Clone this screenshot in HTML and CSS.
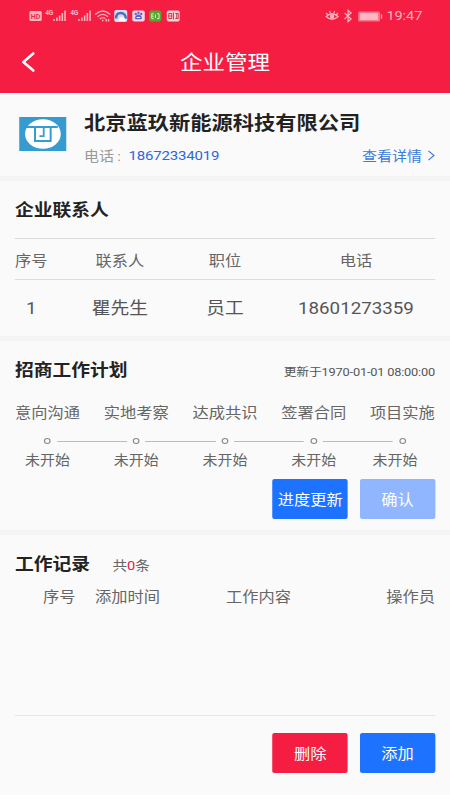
FILE: index.html
```html
<!DOCTYPE html>
<html lang="zh-CN">
<head>
<meta charset="utf-8">
<title>企业管理</title>
<link rel="stylesheet" href="styles.css">
</head>
<body>
<div class="screen">
  <header class="header">
    <div class="status">
      <svg class="status-left" viewBox="0 0 153 16" preserveAspectRatio="none">
        <g fill="#ffb3bd">
          <rect x="0" y="3" width="12.5" height="10" rx="1.5"/>
          <text x="1.5" y="11" font-size="7.5" font-weight="700" textLength="9.5" lengthAdjust="spacingAndGlyphs" fill="#e6304c">HD</text>
          <text x="16" y="7.3" font-size="6.6" font-weight="700" textLength="8">4G</text>
          <path d="M24 11h1.6v2H24zM26.9 9.5h1.6V13h-1.6zM29.6 7.5h1.6V13h-1.6zM32.3 5h1.6v8h-1.6zM35 2.5h1.6V13H35z"/>
          <text x="41" y="7.3" font-size="6.6" font-weight="700" textLength="8">4G</text>
          <path d="M49 11h1.6v2H49zM51.9 9.5h1.6V13h-1.6zM54.6 7.5h1.6V13h-1.6zM57.3 5h1.6v8h-1.6zM60 2.5h1.6V13H60z"/>
        </g>
        <g fill="none" stroke="#ffb3bd" stroke-width="1.3">
          <path d="M66 6.5Q73.5-.5 81 6.5M68.3 8.8Q73.5 4 78.7 8.8M70.5 11Q73.5 8.4 76 10.5"/>
          <path d="M73.5 11.8v1.4M77 11v2.5M79.3 11v2.5" stroke-width="1.5"/>
        </g>
        <rect x="85" y="2" width="13" height="12" rx="2" fill="#d8def2"/>
        <path d="M87 10.5Q86.5 5 91.5 5Q96 5 96.8 10.5" fill="none" stroke="#4b6cc0" stroke-width="2.4"/>
        <path d="M89.5 13q.3-4 3-4t3.5 4" fill="#fff"/>
        <rect x="103" y="2.5" width="12.5" height="11" rx="2" fill="#f6d6e6"/>
        <g fill="#5964c4"><circle cx="106.5" cy="6" r="1.2"/><circle cx="109.2" cy="4.7" r="1.2"/><circle cx="112" cy="6" r="1.2"/><path d="M109.2 6.5c2 0 3.7 2.4 3.4 4-.3 1.2-6.5 1.2-6.8 0-.3-1.6 1.4-4 3.4-4z"/></g>
        <path d="M107.5 9.5h3.4" stroke="#fff"/>
        <rect x="120" y="2.5" width="12" height="11" rx="2" fill="#58a62d"/>
        <path d="M124.5 5.8h-2v4.8h2M122.5 8.2h2M126.2 6.5v3.5M127.8 5.8h2v4.8h-2" stroke="#d5efc5" fill="none"/>
        <rect x="137.5" y="2.5" width="13" height="11" rx="2" fill="#ffd0d4"/>
        <path d="M139.5 5.5h3v5h-3zM139.5 8h3M144.2 4.5v7M146 5.5h3v5h-3M147.5 5.5v5" stroke="#c73a4b" fill="none"/>
      </svg>
      <svg class="status-right" viewBox="0 0 58 16" preserveAspectRatio="none">
        <g fill="none" stroke="#ffb3bd" stroke-width="1.2">
          <path d="M1 8.5Q7 3 13 8.5Q7 14 1 8.5zM1 5l1.7 1.7M4.5 3l.8 2M9.5 3l-.8 2M13 5l-1.7 1.7"/>
          <circle cx="7" cy="8.5" r="1.6" fill="#ffb3bd"/>
          <path d="M19.5 5l6.5 6-3 2.7V2.3L26 5l-6.5 6"/>
        </g>
        <rect x="33" y="3.5" width="22" height="10" rx="1.5" fill="#f77488"/>
        <rect x="34.8" y="5" width="18.2" height="7" fill="#ffb8c1"/>
        <rect x="55.8" y="6.3" width="1.5" height="4.4" fill="#ffa1ae"/>
      </svg>
      <span class="clock">19:47</span>
    </div>
    <div class="nav">
      <svg class="back" viewBox="0 0 14 20" preserveAspectRatio="none"><path d="M12 1.5L2 10L12 18.5" fill="none" stroke="#fff" stroke-width="2.6" stroke-linecap="round" stroke-linejoin="round"/></svg>
      <h1 class="title">企业管理</h1>
    </div>
  </header>

  <section class="panel company">
    <svg class="logo" viewBox="0 0 48 34" preserveAspectRatio="none">
      <rect width="48" height="34" fill="#369bd0"/>
      <ellipse cx="24" cy="17" rx="18" ry="14.7" fill="#fff"/>
      <path d="M5 10h34" fill="none" stroke="#369bd0" stroke-width="1.8"/>
      <path d="M16 10v14h15.8V10" fill="none" stroke="#369bd0" stroke-width="2"/>
      <path d="M24.8 10v9.2h-4.3" fill="none" stroke="#369bd0" stroke-width="1.8"/>
    </svg>
    <div class="company-info">
      <h2 class="company-name">北京蓝玖新能源科技有限公司</h2>
      <div class="company-row">
        <span class="label">电话<span class="colon">:</span></span><span class="phone">18672334019</span>
        <span class="detail">查看详情<svg class="arrow" viewBox="0 0 8 12" preserveAspectRatio="none"><path d="M1 1l6 5-6 5" fill="none" stroke="#3d7bd6" stroke-width="1.3"/></svg></span>
      </div>
    </div>
  </section>

  <section class="panel contacts">
    <h3 class="heading">企业联系人</h3>
    <div class="contact-row contact-head"><span>序号</span><span>联系人</span><span>职位</span><span>电话</span></div>
    <div class="contact-row contact-body"><span>1</span><span>瞿先生</span><span>员工</span><span>18601273359</span></div>
  </section>

  <section class="panel plan">
    <div class="plan-head"><h3 class="heading">招商工作计划</h3><span class="updated">更新于1970-01-01 08:00:00</span></div>
    <div class="steps">
      <div class="step"><span>意向沟通</span><i class="dot"></i><span class="state">未开始</span></div>
      <div class="line"></div>
      <div class="step"><span>实地考察</span><i class="dot"></i><span class="state">未开始</span></div>
      <div class="line"></div>
      <div class="step"><span>达成共识</span><i class="dot"></i><span class="state">未开始</span></div>
      <div class="line"></div>
      <div class="step"><span>签署合同</span><i class="dot"></i><span class="state">未开始</span></div>
      <div class="line"></div>
      <div class="step step-last"><span>项目实施</span><i class="dot"></i><span class="state">未开始</span></div>
    </div>
    <div class="actions"><button class="btn blue">进度更新</button><button class="btn pale">确认</button></div>
  </section>

  <section class="panel records">
    <div class="record-title"><h3 class="heading">工作记录</h3><span class="count">共<b>0</b>条</span></div>
    <div class="record-head"><span>序号</span><span>添加时间</span><span>工作内容</span><span>操作员</span></div>
    <div class="actions footer"><button class="btn red">删除</button><button class="btn blue">添加</button></div>
  </section>
</div>
</body>
</html>
```

FILE: styles.css
```css
* { box-sizing: border-box; margin: 0; padding: 0; }
html, body { width: 450px; height: 800px; overflow: hidden; background: #fff; }
/* The layout is 400 units wide and is widened to fill the viewport. */
.screen {
  width: 400px; height: 800px;
  transform: scaleX(1.125); transform-origin: 0 0;
  display: flex; flex-direction: column;
  font-family: Roboto, "Noto Sans CJK SC", sans-serif;
  font-size: 14.44px; color: #666; background: #fff;
}
svg { display: block; flex: none; }
.header { height: 93px; background: #f61d42; color: #fff; flex: none; }
.status { display: flex; align-items: center; height: 32px; padding-left: 26.2px; }
.status-left { width: 136px; height: 16px; }
.status-right { width: 51.5px; height: 16px; margin-left: 126.5px; }
.clock { margin-left: 3.3px; font-size: 12.8px; line-height: 16px; color: #ffb3bd; }
.nav { position: relative; height: 61px; display: flex; align-items: center; justify-content: center; }
.back { position: absolute; left: 18.5px; top: 20px; width: 12.4px; height: 20px; }
.title { font-size: 20px; line-height: 30px; font-weight: 400; }

.panel { background: #fafafa; padding: 0 13.33px; flex: none; border-bottom: 5px solid #f4f4f4; }
.company { height: 88px; display: flex; padding-left: 17.2px; }
.logo { width: 42.3px; height: 34px; margin-top: 24px; }
.company-info { flex: 1; margin-left: 15.2px; padding-top: 16px; }
.company-name { font-size: 18.9px; line-height: 30px; font-weight: 700; color: #222; white-space: nowrap; }
.company-row { display: flex; align-items: center; height: 20px; margin-top: 6px; font-size: 13.33px; }
.label { width: 39.5px; color: #999; }
.colon { margin-left: 3px; }
.phone { color: #2c67dc; letter-spacing: -.15px; }
.detail { display: flex; align-items: center; margin-left: auto; color: #3d7bd6; }
.arrow { width: 6.5px; height: 11px; margin-left: 5px; }

.heading { font-size: 16.67px; line-height: 24px; font-weight: 700; color: #222; }
.contacts { height: 160px; padding-top: 18px; }
.contact-row { display: grid; grid-template-columns: 46.2px 94.2px 92.4px 1fr; text-align: center; }
.contact-row span:first-child { padding-right: 17.3px; white-space: nowrap; }
.contact-head { height: 42px; margin-top: 15px; line-height: 46px; border-top: 1px solid #ddd; border-bottom: 1px solid #ddd; }
.contact-body { font-size: 16.67px; line-height: 58px; color: #555; }

.plan { height: 194px; padding-top: 18px; }
.plan-head { display: flex; justify-content: space-between; align-items: center; height: 24px; }
.updated { font-size: 11.4px; letter-spacing: -.18px; color: #555; }
.steps { display: flex; justify-content: space-between; margin-top: 20px; }
.step { width: 57.8px; flex: none; display: flex; flex-direction: column; align-items: center; line-height: 22px; white-space: nowrap; }
.dot { width: 6px; height: 6px; border: 1px solid #888; border-radius: 50%; margin: 13px 0 6px; }
.state { font-size: 13.33px; }
.step-last .state { margin-right: 13px; }
.line { width: 62.2px; margin: 38px -20.6px 0; height: 1px; background: #bbb; flex: none; }
.actions { display: flex; justify-content: flex-end; gap: 11px; }
.plan .actions { margin-top: 7px; }
.btn { width: 66.67px; height: 40px; padding-bottom: 2px; border: 0; border-radius: 2px; font: inherit; color: #fff; white-space: nowrap; }
.blue { background: #1d72ff; }
.pale { background: #8fb6ff; }
.red { background: #f61d42; }

.records { height: 260px; padding-top: 18px; border-bottom: 0; }
.record-title { display: flex; align-items: center; height: 24px; }
.count { font-size: 13px; margin-left: 20px; padding-bottom: 1px; }
.count b { font-weight: 400; color: #e0234c; }
.record-head { display: grid; grid-template-columns: 46.2px 116.4px 1fr auto; padding-left: 25px; margin-top: 10px; line-height: 22px; }
.footer { margin-top: 106px; padding-top: 17px; border-top: 1px solid #e6e6e6; }
```
